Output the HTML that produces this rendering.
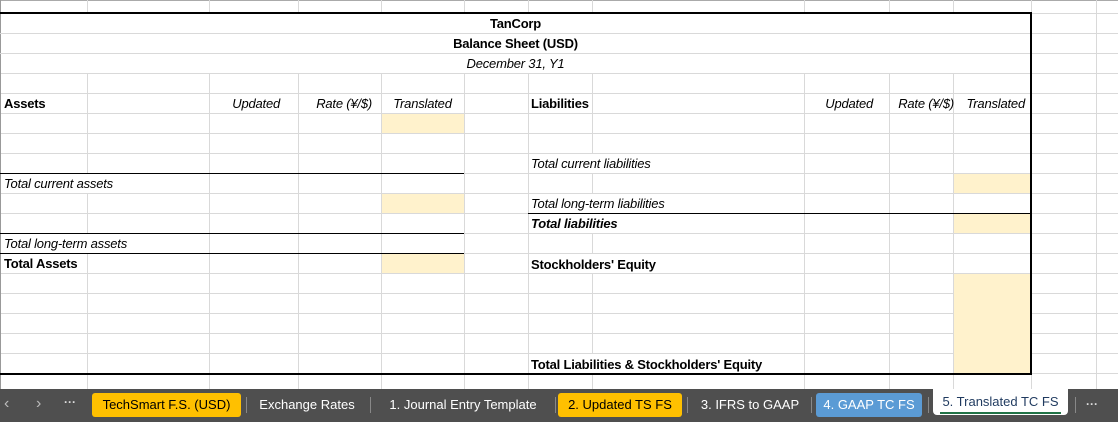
<!DOCTYPE html>
<html><head><meta charset="utf-8"><style>
*{margin:0;padding:0;box-sizing:border-box}
body{width:1118px;height:422px;overflow:hidden;background:#fff;position:relative;font-family:"Liberation Sans",sans-serif;font-size:13px;color:#000}
.a{position:absolute}
.v{position:absolute;top:0;height:389px;width:1px;background:#d9d9d9}
.h{position:absolute;left:0;width:1118px;height:1px;background:#d9d9d9}
.f{position:absolute;background:#fff2cc}
.t{position:absolute;height:20px;line-height:22px;white-space:nowrap;letter-spacing:-0.2px}
.i{font-style:italic}.b{font-weight:bold}
.k{position:absolute;height:1px;background:#000}
.tab{position:absolute;top:393px;height:24px;line-height:24px;color:#fff;font-size:13px;text-align:center;border-radius:3px}
.sep{position:absolute;top:397px;width:1px;height:16px;background:#888}
.w{position:absolute;background:#fff;height:19px}
</style></head><body>
<div class="a" style="left:0;top:0;width:1118px;height:389px;background:repeating-linear-gradient(to bottom,#d9d9d9 0 1px,transparent 1px 20px);background-position:0 13px;background-size:100% 20px;top:0"></div>
<div class="a" style="left:0;top:0;width:1118px;height:13px;background:#fff"></div>
<div class="h" style="top:0;background:#aaa"></div>
<div class="v" style="left:87px"></div><div class="v" style="left:209px"></div><div class="v" style="left:298px"></div><div class="v" style="left:381px"></div><div class="v" style="left:464px"></div><div class="v" style="left:528px"></div><div class="v" style="left:592px"></div><div class="v" style="left:804px"></div><div class="v" style="left:889px"></div><div class="v" style="left:953px"></div><div class="v" style="left:1031px"></div><div class="v" style="left:1096px"></div>
<div class="v" style="left:0;background:#999"></div>
<!-- title area -->
<div class="a" style="left:1px;top:14px;width:1030px;height:59px;background:#fff"></div>
<div class="h" style="top:33px;width:1031px"></div><div class="h" style="top:53px;width:1031px"></div>
<!-- hide gridlines under overflowing text -->
<div class="w" style="left:529px;top:154px;width:160px"></div>
<div class="w" style="left:529px;top:194px;width:160px"></div>
<div class="w" style="left:529px;top:214px;width:100px"></div>
<div class="w" style="left:529px;top:254px;width:130px"></div>
<div class="w" style="left:529px;top:354px;width:260px"></div>
<div class="w" style="left:1px;top:174px;width:140px"></div>
<div class="w" style="left:1px;top:234px;width:150px"></div>
<!-- fills -->
<div class="f" style="left:382px;top:114px;width:82px;height:19px"></div>
<div class="f" style="left:382px;top:194px;width:82px;height:19px"></div>
<div class="f" style="left:382px;top:254px;width:82px;height:19px"></div>
<div class="f" style="left:954px;top:174px;width:77px;height:19px"></div>
<div class="f" style="left:954px;top:214px;width:77px;height:19px"></div>
<div class="f" style="left:954px;top:274px;width:77px;height:99px"></div>
<!-- black lines -->
<div class="k" style="left:0;top:173px;width:464px"></div>
<div class="k" style="left:0;top:233px;width:464px"></div>
<div class="k" style="left:0;top:253px;width:464px"></div>
<div class="k" style="left:528px;top:213px;width:503px"></div>
<div class="a" style="left:-2px;top:12px;width:1034px;height:363px;border:2px solid #000"></div>
<!-- text -->
<div class="t b" style="left:0;width:1031px;top:13px;text-align:center">TanCorp</div>
<div class="t b" style="left:0;width:1031px;top:33px;text-align:center">Balance Sheet (USD)</div>
<div class="t i" style="left:0;width:1031px;top:53px;text-align:center">December 31, Y1</div>
<div class="t b" style="left:4px;top:93px">Assets</div>
<div class="t i" style="left:209px;width:71px;top:93px;text-align:right">Updated</div>
<div class="t i" style="left:298px;width:74px;top:93px;text-align:right">Rate (¥/$)</div>
<div class="t i" style="left:381px;width:83px;top:93px;text-align:center">Translated</div>
<div class="t b" style="left:531px;top:93px">Liabilities</div>
<div class="t i" style="left:804px;width:69px;top:93px;text-align:right">Updated</div>
<div class="t i" style="left:886px;width:68px;top:93px;text-align:right">Rate (¥/$)</div>
<div class="t i" style="left:953px;width:72px;top:93px;text-align:right">Translated</div>
<div class="t i" style="left:531px;top:153px">Total current liabilities</div>
<div class="t i" style="left:4px;top:173px">Total current assets</div>
<div class="t i" style="left:531px;top:193px">Total long-term liabilities</div>
<div class="t i b" style="left:531px;top:213px">Total liabilities</div>
<div class="t i" style="left:4px;top:233px">Total long-term assets</div>
<div class="t b" style="left:4px;top:253px">Total Assets</div>
<div class="t b" style="left:531px;top:254px">Stockholders' Equity</div>
<div class="t b" style="left:531px;top:354px">Total Liabilities &amp; Stockholders' Equity</div>
<!-- tab bar -->
<div class="a" style="left:0;top:389px;width:1118px;height:33px;background:#4f4f4f"></div>
<div class="a" style="left:4px;top:394px;color:#bbb;font-size:16px;line-height:20px">&#8249;</div>
<div class="a" style="left:36px;top:394px;color:#bbb;font-size:16px;line-height:20px">&#8250;</div>
<div class="a" style="left:64px;top:392px;color:#ddd;font-size:12px;line-height:20px;font-weight:bold">···</div>
<div class="tab" style="left:92px;width:149px;background:#ffc000;color:#000">TechSmart F.S. (USD)</div>
<div class="sep" style="left:246px"></div>
<div class="tab" style="left:248px;width:118px">Exchange Rates</div>
<div class="sep" style="left:370px"></div>
<div class="tab" style="left:372px;width:182px">1. Journal Entry Template</div>
<div class="sep" style="left:555px"></div>
<div class="tab" style="left:558px;width:124px;background:#ffc000;color:#000">2. Updated TS FS</div>
<div class="sep" style="left:687px"></div>
<div class="tab" style="left:689px;width:122px">3. IFRS to GAAP</div>
<div class="sep" style="left:811px"></div>
<div class="tab" style="left:816px;width:106px;background:#5b9bd5;color:#fff">4. GAAP TC FS</div>
<div class="sep" style="left:928px"></div>
<div class="a" style="left:933px;top:389px;width:135px;height:26px;background:#fff;border-radius:0 0 4px 4px"></div>
<div class="tab" style="left:933px;top:390px;width:135px;color:#1f3a5f;border-radius:0">5. Translated TC FS</div>
<div class="a" style="left:940px;top:412px;width:121px;height:2px;background:#217346"></div>
<div class="sep" style="left:1075px"></div>
<div class="a" style="left:1086px;top:394px;color:#ddd;font-size:12px;line-height:20px;font-weight:bold">···</div>
</body></html>
